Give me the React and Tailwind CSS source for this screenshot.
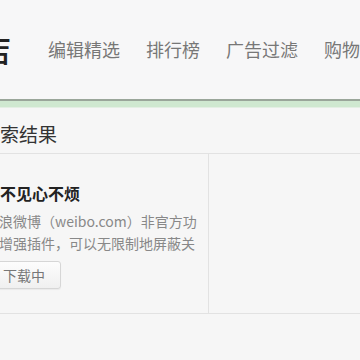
export default function App() {
    const nav = ["编辑精选", "排行榜", "广告过滤", "购物助手"];

    return (
        <div className="w-[360px] h-[360px] overflow-hidden bg-[#f6f6f6] font-['Noto_Sans_CJK_SC',sans-serif]">
            {/* Header */}
            <div className="h-[99px] flex items-center whitespace-nowrap bg-[#f7f7f8]">
                <span className="-ml-[117px] text-[32px] leading-none font-medium text-[#222] -mt-[4px]">应用商店</span>
                <div className="ml-[37px] flex gap-[26px] text-[18px] text-[#777]">
                    {nav.map((n) => (
                        <span key={n}>{n}</span>
                    ))}
                </div>
            </div>
            <div className="h-[2px] bg-[#9aa69a]" />
            <div className="h-[6px] bg-[#cfe8d0]" />
            <div className="h-[1px] bg-[#e4efe4]" />

            {/* Section title */}
            <div className="h-[46px] pt-[13px] border-b border-[#e2e2e2]">
                <div className="-ml-[19px] text-[19px] leading-[26px] text-[#333] whitespace-nowrap">搜索结果</div>
            </div>

            {/* Results row */}
            <div className="flex h-[160px] border-b border-[#e2e2e2]">
                <div className="w-[209px] border-r border-[#e2e2e2] overflow-hidden">
                    <div className="-ml-[13px] pt-[28px] whitespace-nowrap">
                        <div className="-ml-[3px] text-[16px] leading-[22px] font-bold text-[#222]">眼不见心不烦</div>
                        <div className="-ml-[2px] mt-[6px] text-[14px] leading-[22px] text-[#888]">
                            <div>新浪微博（weibo.com）非官方功</div>
                            <div>能增强插件，可以无限制地屏蔽关</div>
                        </div>
                        <button className="mt-[7px] h-[28px] px-[15px] rounded-[3px] border border-[#d6d6d6] bg-gradient-to-b from-[#fdfdfd] to-[#f0f0f0] text-[14px] text-[#777] shadow-[0_1px_1px_rgba(0,0,0,0.05)]">
                            下载中
                        </button>
                    </div>
                </div>
                <div className="flex-1" />
            </div>
        </div>
    );
}
